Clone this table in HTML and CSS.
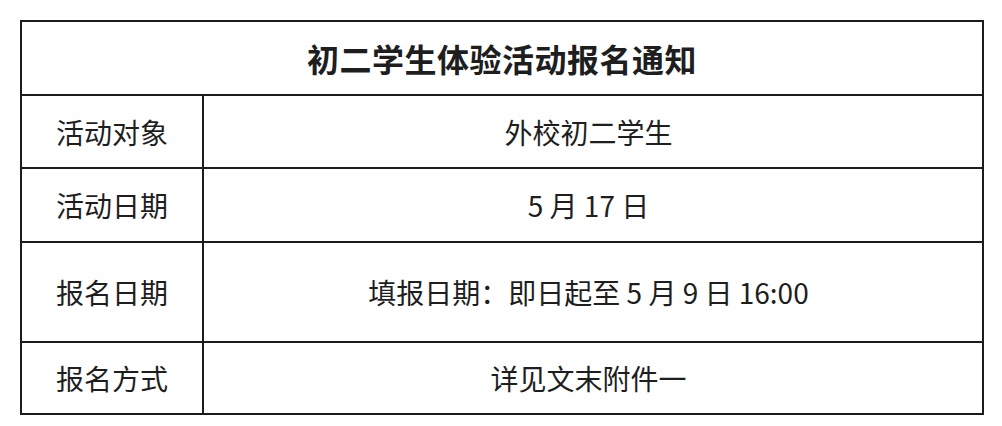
FILE: index.html
```html
<!DOCTYPE html>
<html lang="zh-CN">
<head>
<meta charset="utf-8">
<title>初二学生体验活动报名通知</title>
<link rel="stylesheet" href="styles.css">
</head>
<body>
<table class="notice">
  <colgroup><col class="col-label"><col class="col-value"></colgroup>
  <tr class="row-title"><th colspan="2" class="title">初二学生体验活动报名通知</th></tr>
  <tr class="row-a"><td class="label">活动对象</td><td class="value">外校初二学生</td></tr>
  <tr class="row-b"><td class="label">活动日期</td><td class="value">5 月 17 日</td></tr>
  <tr class="row-c"><td class="label">报名日期</td><td class="value">填报日期：即日起至 5 月 9 日 16:00</td></tr>
  <tr class="row-d"><td class="label">报名方式</td><td class="value">详见文末附件一</td></tr>
</table>
</body>
</html>
```

FILE: styles.css
```css
html, body {
  margin: 0;
  padding: 0;
  background: #ffffff;
}
body {
  padding: 20px 0 0 20px;
  font-family: "Noto Sans CJK SC", "Noto Sans", sans-serif;
  color: #1e1e1e;
}
.notice {
  border-collapse: collapse;
  width: 964px;
  table-layout: fixed;
}
.col-label { width: 182px; }
.notice th, .notice td {
  border: 2px solid #1c1c1c;
  padding: 0;
  text-align: center;
  vertical-align: middle;
}
.title {
  font-size: 32px;
  font-weight: 700;
  height: 72px;
  letter-spacing: 0.5px;
}
.label {
  font-size: 28px;
}
.value {
  font-size: 28px;
  padding-right: 9px !important;
}
.row-a td { height: 71px; }
.row-b td { height: 72px; }
.row-c td { height: 98px; }
.row-d td { height: 70px; }
```
